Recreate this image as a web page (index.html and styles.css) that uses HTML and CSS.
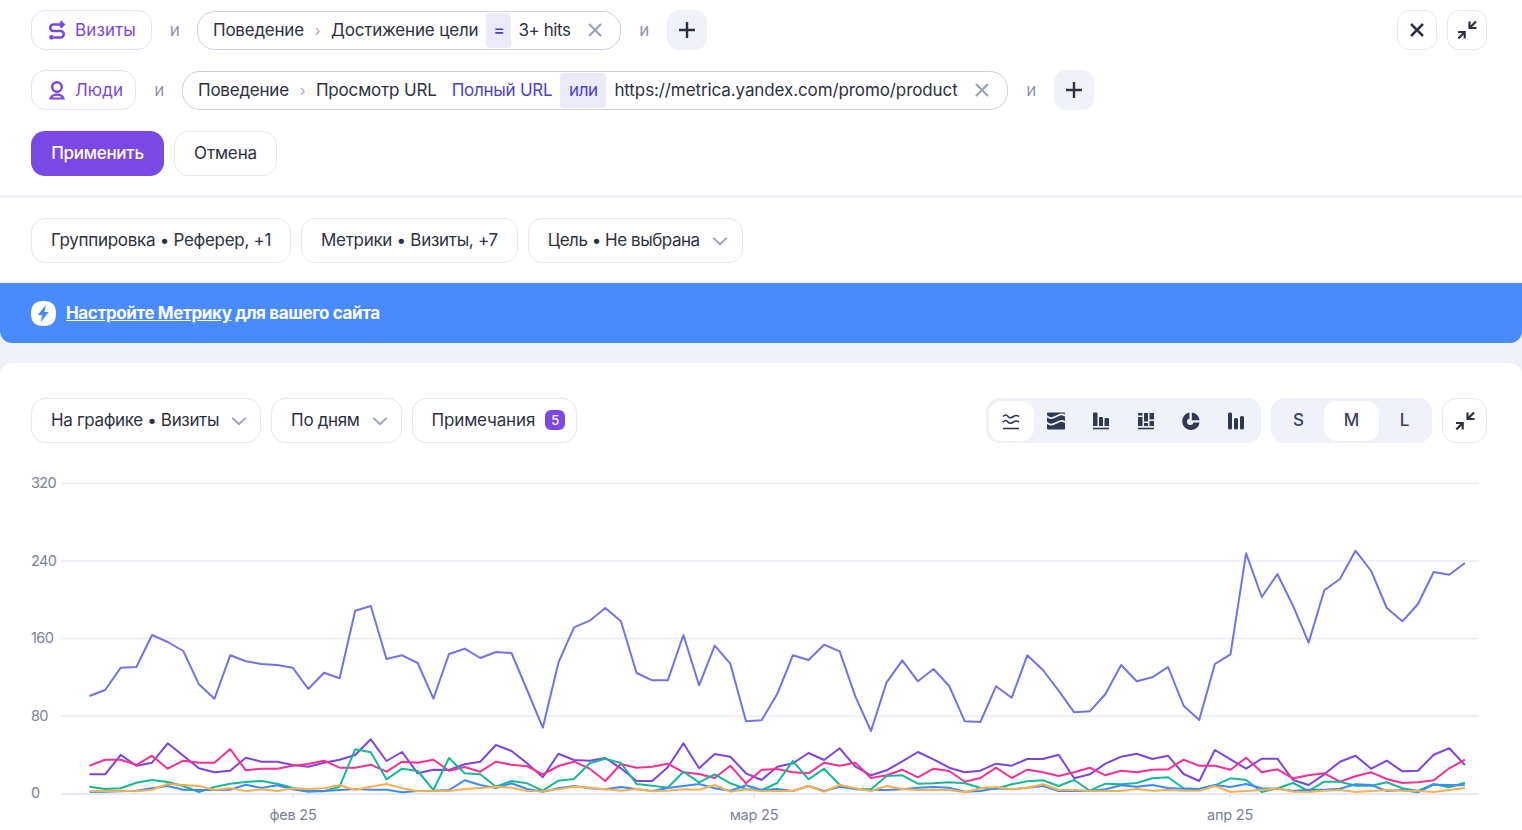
FILE: index.html
```html
<!DOCTYPE html>
<html lang="ru">
<head>
<meta charset="utf-8">
<title>Отчёт</title>
<link rel="stylesheet" href="styles.css">
</head>
<body>
<header class="filters">
  <div class="filter-row">
    <div class="row-main">
      <button class="segment-pill visits">
        <svg class="ico" viewBox="0 0 20 20"><path d="M16 4.500H6.500a3 3 0 0 0 0 6.500h7a3 3 0 0 1 0 6.500H7M13.500 1.500l3 3-3 3" fill="none" stroke="currentColor" stroke-width="2.600"/><circle cx="4.500" cy="17.300" r="2.400" fill="currentColor"/></svg>
        Визиты
      </button>
      <span class="conj conj-a">и</span>
      <div class="cond cond-visits">
        <span class="cond-key">Поведение</span><span class="sep">›</span><span class="cond-val">Достижение цели</span>
        <span class="op">=</span><span class="cond-val hits">3+ hits</span>
        <svg class="x" viewBox="0 0 16 16"><path d="M2 2l12 12M14 2L2 14"/></svg>
      </div>
      <span class="conj conj-b">и</span>
      <button class="plus"><svg viewBox="0 0 20 20"><path d="M10 2v16M2 10h16"/></svg></button>
    </div>
    <div class="row-actions">
      <button class="square"><svg class="dark-x" viewBox="0 0 16 16"><path d="M2 2l12 12M14 2L2 14"/></svg></button>
      <button class="square"><svg class="collapse" viewBox="0 0 20 20"><path d="M12.500 8L19 1.500M12.500 1.500V8H19.500M7.700 12L1.300 18.500M1 12H7.700V18.500"/></svg></button>
    </div>
  </div>
  <div class="filter-row second">
    <div class="row-main">
      <button class="segment-pill people">
        <svg class="ico" viewBox="0 0 20 20"><circle cx="10" cy="7" r="4.800" fill="none" stroke="currentColor" stroke-width="2.500"/><path d="M3.500 18.500c1-2.800 3.500-3.800 6.500-3.800s5.500 1 6.500 3.800z" fill="none" stroke="currentColor" stroke-width="2.200"/></svg>
        Люди
      </button>
      <span class="conj conj-a">и</span>
      <div class="cond cond-people">
        <span class="cond-key">Поведение</span><span class="sep">›</span><span class="cond-val">Просмотр URL</span>
        <span class="cond-link">Полный URL</span>
        <span class="op op-or">или</span><span class="cond-val url">https://metrica.yandex.com/promo/product</span>
        <svg class="x" viewBox="0 0 16 16"><path d="M2 2l12 12M14 2L2 14"/></svg>
      </div>
      <span class="conj conj-b">и</span>
      <button class="plus"><svg viewBox="0 0 20 20"><path d="M10 2v16M2 10h16"/></svg></button>
    </div>
  </div>
  <div class="apply-row">
    <button class="apply">Применить</button>
    <button class="pill cancel">Отмена</button>
  </div>
</header>

<section class="settings">
  <button class="pill wide">Группировка • Реферер, +1</button>
  <button class="pill wide">Метрики • Визиты, +7</button>
  <button class="pill tight">Цель • Не выбрана<svg class="chev" viewBox="0 0 18 10"><path d="M1.500 1.500L9 8.500l7.500-7"/></svg></button>
</section>

<div class="banner-wrap">
  <div class="banner">
    <span class="bolt"><svg viewBox="0 0 26 26"><path d="M13 0c9 0 13 4 13 13s-4 13-13 13S0 22 0 13 4 0 13 0z" fill="#fff"/><path d="M15.500 4L7 14.500h4.500L10 22l8.500-10.500H14z" fill="#4a8aff"/></svg></span>
    <span class="banner-text"><a class="banner-link">Настройте Метрику</a> для вашего сайта</span>
  </div>
</div>

<main class="card">
  <div class="controls">
    <div class="controls-left">
      <button class="pill">На графике • Визиты<svg class="chev chev-c" viewBox="0 0 18 10"><path d="M1.500 1.500L9 8.500l7.500-7"/></svg></button>
      <button class="pill">По дням<svg class="chev chev-c" viewBox="0 0 18 10"><path d="M1.500 1.500L9 8.500l7.500-7"/></svg></button>
      <button class="pill notes">Примечания<span class="badge">5</span></button>
    </div>
    <div class="controls-right">
      <div class="seg">
        <span class="seg-item active"><svg viewBox="0 0 20 20" class="stroke-ico"><path d="M2 5.500c2-2 3.500-2 5 0s3.500 1.500 5.500 0 3.500-1.500 5.500 0M2 11c2-2 3.500-2 5 0s3.500 1.500 5.500 0 3.500-1.500 5.500 0"/><path class="base" d="M2 17.500h16"/></svg></span>
        <span class="seg-item"><svg viewBox="0 0 20 20"><rect class="fill" x="1" y="1.500" width="18" height="17" rx="1"/><path class="cut" d="M0 4.500c3.500 3 5.500 3.500 10 1s6-3 10-.5M0 11c3.500 3 5.500 3.500 10 1s6-3 10-.5"/></svg></span>
        <span class="seg-item"><svg viewBox="0 0 20 20"><path class="fill" d="M2 2.500a1 1 0 0 1 1-1h2.500a1 1 0 0 1 1 1V15H2zM8 7a1 1 0 0 1 1-1h2a1 1 0 0 1 1 1v8H8zM13.500 8a1 1 0 0 1 1-1H17a1 1 0 0 1 1 1v7h-4.500z"/><path class="base" d="M2 17.500h16"/></svg></span>
        <span class="seg-item"><svg viewBox="0 0 20 20"><path class="fill" d="M2 2h4.500v2.500H2zM2 6h4.500v9H2zM8 2h4v8.500H8zM8 12h4v3H8zM13.500 2H18v6.500h-4.500zM13.500 10H18v5h-4.500z"/><path class="base" d="M2 17.500h16"/></svg></span>
        <span class="seg-item"><svg viewBox="0 0 20 20"><path class="fill" fill-rule="evenodd" d="M8.500 1.500A8.800 8.800 0 1 0 18.700 11.500H12.500A3.300 3.300 0 1 1 8.500 7.500zM10.800 1.500a8.500 8.500 0 0 1 7.900 7.700h-7.900z"/></svg></span>
        <span class="seg-item"><svg viewBox="0 0 20 20"><path class="fill" d="M2 3a1.500 1.500 0 0 1 1.500-1.500h1A1.500 1.500 0 0 1 6 3v14a1.500 1.500 0 0 1-1.500 1.500h-1A1.500 1.500 0 0 1 2 17zM8 8.500A1.500 1.500 0 0 1 9.500 7h1A1.500 1.500 0 0 1 12 8.500V17a1.500 1.500 0 0 1-1.500 1.500h-1A1.500 1.500 0 0 1 8 17zM14 6.500A1.500 1.500 0 0 1 15.500 5h1A1.500 1.500 0 0 1 18 6.500V17a1.500 1.500 0 0 1-1.500 1.500h-1A1.500 1.500 0 0 1 14 17z"/></svg></span>
      </div>
      <div class="seg sizes">
        <span class="size">S</span><span class="size active">M</span><span class="size">L</span>
      </div>
      <button class="square tall"><svg class="collapse" viewBox="0 0 20 20"><path d="M12.500 8L19 1.500M12.500 1.500V8H19.500M7.700 12L1.300 18.500M1 12H7.700V18.500"/></svg></button>
    </div>
  </div>
  <svg class="chart" id="chart" viewBox="0 463 1522 367" width="1522" height="367">
    <g class="grid">
      <path d="M61 483.500H1479M61 561H1479M61 638.500H1479M61 716H1479"/>
      <path class="axis" d="M61 794H1479M293 794v4M754 794v4M1230 794v4"/>
    </g>
    <g class="ylabels">
      <text x="31" y="488">320</text>
      <text x="31" y="566">240</text>
      <text x="31" y="643">160</text>
      <text x="31" y="721">80</text>
      <text x="31" y="798">0</text>
    </g>
    <g class="xlabels">
      <text x="293" y="820">фев 25</text>
      <text x="754" y="820">мар 25</text>
      <text x="1230" y="820">апр 25</text>
    </g>
  </svg>
</main>
<script src="chart.js"></script>
</body>
</html>
```
FILE: styles.css
```css
* { box-sizing: border-box; }
html, body { margin: 0; height: 830px; overflow: hidden; }
body {
  background: #eff2f8;
  font-family: Inter, "Noto Sans", sans-serif;
  font-size: 17px;
  color: #2c3240;
  letter-spacing: -0.35px;
}
button { font: inherit; letter-spacing: inherit; color: inherit; background: #fff; cursor: pointer; margin: 0; }

.filters {
  background: #fff;
  height: 198px;
  padding: 10px 35px 0 31px;
  border-bottom: 3px solid #f0f2f7;
}
.filter-row { display: flex; justify-content: space-between; height: 40px; }
.filter-row.second { margin-top: 20px; }
.row-main { display: flex; align-items: center; }
.row-actions { display: flex; gap: 10px; }

.segment-pill {
  display: flex; align-items: center; gap: 8px;
  height: 40px; padding: 0 0 0 15px;
  border: 1px solid #e6e3fa; border-radius: 14px;
  color: #7a48e4; letter-spacing: 0.1px;
}
.ico { width: 20px; height: 20px; flex: none; }
.visits { width: 121px; }
.people { width: 105px; }
.conj { color: #8f97ab; width: 45px; text-align: center; }
.people ~ .conj.conj-a { width: 46px; }
.conj-b { width: 46px; }
.cond {
  display: flex; align-items: center;
  align-self: flex-end;
  height: 39px; padding: 0 17px 1px 15px;
  border: 1px solid #cdd1e0; border-radius: 18px;
  white-space: nowrap;
}
.cond-visits { width: 424px; }
.cond-people { width: 826px; }
.sep { color: #a0a7ba; width: 27px; text-align: center; font-size: 15px; }
.cond-key { letter-spacing: -0.23px; }
.cond-val { letter-spacing: -0.17px; }
.op {
  background: #ebebf8; color: #4d3fd0;
  height: 35px; display: flex; align-items: center; justify-content: center;
  border-radius: 4px; margin-left: 8px; width: 25px;
  font-weight: 500;
}
.op-or { width: 46px; font-weight: 400; }
.hits { margin-left: 7px; letter-spacing: -0.4px; }
.url { margin-left: 8px; letter-spacing: -0.1px; }
.cond-link { color: #4d3fd0; margin-left: 15px; letter-spacing: -0.25px; }
.x { width: 16px; height: 16px; margin-left: auto; }
.x path { stroke: #9aa3b8; stroke-width: 2.200; fill: none; }
.plus {
  width: 40px; height: 40px; border: 0; border-radius: 12px;
  background: #eff2f8; display: flex; align-items: center; justify-content: center; padding: 0;
}
.plus svg { width: 20px; height: 20px; }
.plus path { stroke: #2c3240; stroke-width: 2.400; fill: none; }
.square {
  width: 40px; height: 40px; padding: 0;
  border: 1px solid #e8e8f5; border-radius: 12px;
  display: flex; align-items: center; justify-content: center;
}
.square.tall { width: 45px; height: 45px; border-radius: 14px; }
.dark-x { width: 16px; height: 16px; }
.dark-x path { stroke: #2c3240; stroke-width: 2.500; fill: none; }
.collapse { width: 20px; height: 20px; }
.collapse path { stroke: #2c3240; stroke-width: 2.200; fill: none; }

.apply-row { display: flex; gap: 10px; margin-top: 21px; }
.apply {
  height: 45px; width: 133px; border: 0; border-radius: 14px;
  background: #7a48e4; color: #fff; font-weight: 500;
  letter-spacing: -0.3px; padding: 0 0 2px;
}
.pill {
  display: inline-flex; align-items: center;
  height: 45px; padding: 0 19px 2px;
  border: 1px solid #e6e8f2; border-radius: 14px;
  white-space: nowrap;
}
.cancel { width: 103px; justify-content: center; letter-spacing: -0.15px; }
.wide { letter-spacing: -0.3px; }
.tight { letter-spacing: -0.47px; }
.notes { letter-spacing: -0.15px; }

.settings {
  background: #fff; display: flex; gap: 10px;
  padding: 20px 31px 20px;
  height: 85px;
}
.chev { width: 16px; height: 10px; margin-left: 12px; margin-right: -5px; margin-top: 2px; }
.chev-c { margin-right: -6px; }
.chev path { stroke: #9aa3b8; stroke-width: 2.200; fill: none; }

.banner-wrap { background: linear-gradient(#fff 50%, transparent 50%); height: 60px; }
.banner {
  background: #4a8aff; color: #fff;
  height: 60px; border-radius: 0 0 12px 12px;
  display: flex; align-items: center; gap: 10px;
  padding-left: 31px;
  font-weight: 700; letter-spacing: -0.37px;
}
.bolt { width: 25px; height: 25px; display: block; }
.bolt svg { width: 25px; height: 25px; display: block; }
.banner-link { text-decoration: underline; }

.card {
  background: #fff; margin-top: 20px;
  border-radius: 12px 12px 0 0;
  height: 467px; padding-top: 35px;
}
.controls { display: flex; justify-content: space-between; padding: 0 35px 0 31px; height: 45px; }
.controls-left { display: flex; gap: 10px; }
.controls-right { display: flex; gap: 10px; }
.badge {
  background: #7a48e4; color: #fff; font-size: 13px; font-weight: 500;
  width: 20px; height: 20px; border-radius: 6px; margin: 1px -8px 0 10px;
  display: flex; align-items: center; justify-content: center; letter-spacing: 0;
}
.seg {
  background: #eff2f8; border-radius: 14px; height: 45px;
  display: flex; align-items: center; padding: 0 3px; width: 275px;
}
.seg-item {
  width: 45px; height: 40px; border-radius: 13px;
  display: flex; align-items: center; justify-content: center;
}
.seg-item.active { background: #fff; }
.seg-item svg { width: 20px; height: 20px; }
.fill { fill: #2f3a50; }
.cut { stroke: #eff2f8; stroke-width: 1.800; fill: none; }
.base { stroke: #2f3a50; stroke-width: 1.600; fill: none; }
.stroke-ico path { stroke: #2f3a50; stroke-width: 1.600; fill: none; }
.sizes { width: 161px; padding: 0 0 0 2px; }
.size {
  height: 40px; width: 51px; display: flex; align-items: center; justify-content: center;
  font-weight: 500; font-size: 17px; letter-spacing: 0; color: #3a4356;
  border-radius: 13px; padding-bottom: 2px;
}
.size.active { background: #fff; width: 55px; }

.chart { display: block; margin-top: 20px; }
.grid path { stroke: #e9ebf5; stroke-width: 1.500; fill: none; }
.grid .axis { stroke: #dfe2ee; }
.ylabels text, .xlabels text { fill: #7a8299; font-size: 14.500px; letter-spacing: -0.2px; }
.ylabels text { letter-spacing: -0.6px; }
.xlabels text { text-anchor: middle; }
.series { fill: none; stroke-width: 2; stroke-linejoin: round; }
```
FILE: chart.js
```js
// Daily values per series, read as pixel positions on the plot.
const STEP = 15.63, X0 = 89.5;
const main = [696,690,667.7,667,635,642,651,684.3,698.7,655.3,661.3,664,665,667.7,689,672.7,678.3,610.7,606,659,655.3,663,698.7,654,648.7,658,652,653,690,727.7,
  662.7,627.3,620.7,608,621.3,673,680.3,680.3,635,685.3,645.7,663.7,721.3,720.3,694,655.3,660,644.7,651.3,696.7,731,682.3,660.3,681.3,669,686,721.3,722,686.3,697.7,
  655.3,670,690.7,712.3,711.3,694,665,681.3,677.3,667,705.7,720,664,654.3,553.3,597,574,605.7,642.7,590.3,579,550.7,571,608,621.3,604,572,574.7,563];
const low = {
  purple: [163,163,105,137,128,70,107,145,157,152,113,125,125,135,140,128,119,105,58,123,96,160,149,150,133,125,75,93,130,172,101,
    120,122,114,145,183,183,142,70,145,102,110,160,180,140,130,99,120,85,140,166,151,124,96,118,143,157,152,131,137,117,117,104,
    175,163,131,110,101,117,107,162,183,90,118,146,116,116,180,195,163,125,107,146,122,154,152,104,85,135],
  pink: [137,119,119,135,107,146,122,128,128,87,151,146,146,137,132,122,143,143,134,155,125,128,119,152,141,155,125,134,139,163,138,
    125,146,183,132,143,140,131,157,162,174,137,190,149,147,157,160,128,137,128,174,166,149,172,146,153,185,174,143,174,149,157,168,
    157,143,166,152,157,149,148,119,137,137,149,113,157,148,175,166,160,185,169,157,177,189,187,181,145,119],
  green: [200,207,205,188,180,186,198,216,201,191,186,183,191,203,212,214,200,88,97,178,146,153,210,114,160,163,200,183,190,212,182,
    177,130,116,129,192,197,203,155,187,163,190,207,210,189,123,178,146,195,208,208,168,166,191,190,187,190,203,206,193,184,181,198,
    180,212,191,193,189,175,172,205,207,196,175,180,216,205,189,213,185,185,197,197,187,205,213,192,202,188],
  blue: [216,215,214,212,205,198,209,210,210,209,194,204,196,208,215,213,210,207,209,209,217,213,212,210,181,195,204,190,207,215,205,
    198,205,208,201,207,213,204,198,192,205,212,196,210,207,213,198,213,200,207,210,210,208,203,201,203,215,213,205,208,203,198,213,
    212,213,208,196,200,195,204,206,207,195,201,192,205,206,213,209,209,206,193,195,213,210,217,194,195,196],
  orange: [214,213,212,214,209,192,195,198,210,205,213,208,213,205,207,205,196,209,200,192,205,214,213,213,207,204,200,203,213,214,208,
    200,203,208,212,207,214,212,208,209,195,215,208,214,213,213,198,215,195,205,213,198,207,210,210,210,217,205,201,208,203,193,210,
    210,213,213,213,207,212,210,212,212,198,216,213,210,205,215,216,212,210,216,213,210,212,213,216,210,204]
};
const COLORS = { main: '#7373e6', purple: '#7b45e6', pink: '#fb2f92', green: '#17b898', blue: '#3d8bfd', orange: '#ffb04a' };
const svg = document.getElementById('chart');
function line(ys, color) {
  const p = document.createElementNS('http://www.w3.org/2000/svg', 'polyline');
  p.setAttribute('points', ys.map((y, i) => (X0 + i * STEP).toFixed(1) + ',' + y.toFixed(1)).join(' '));
  p.setAttribute('class', 'series');
  p.setAttribute('stroke', color);
  svg.appendChild(p);
}
line(main, COLORS.main);
for (const name of ['purple', 'pink', 'green', 'blue', 'orange']) {
  line(low[name].map(v => 720 + v / 3), COLORS[name]);
}
```
